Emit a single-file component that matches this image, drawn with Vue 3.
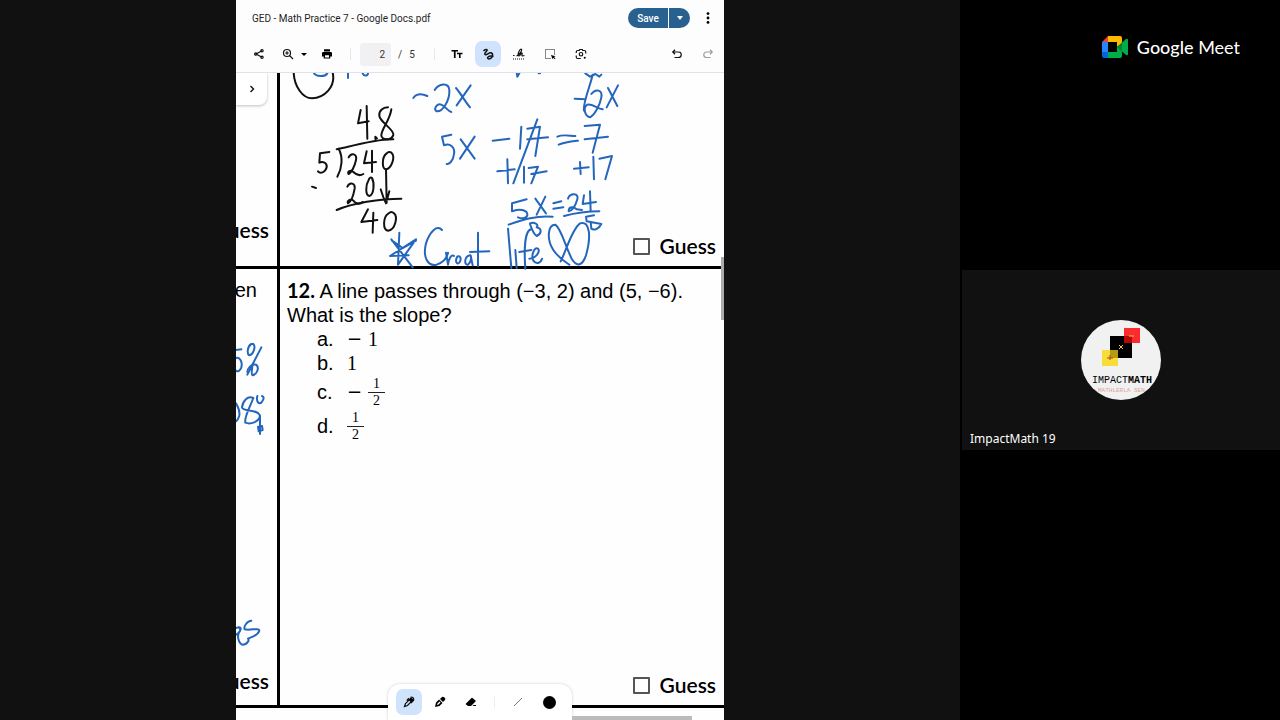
<template>
    <div class="meeting">
        <main class="shared">
            <section class="viewer">
                <header class="titleBar">
                    <h1 class="fileName">GED - Math Practice 7 - Google Docs.pdf</h1>
                    <div class="saveGroup">
                        <button type="button" class="saveButton">Save</button>
                        <button type="button" class="saveMore" aria-label="Save options">
                            <svg width="8" height="4" viewBox="0 0 8 4"><path d="M1 0h6L4 4z" fill="#fff" /></svg>
                        </button>
                    </div>
                    <button type="button" class="menuButton" aria-label="Menu">
                        <svg width="4" height="12" viewBox="0 0 4 12">
                            <circle cx="2" cy="1.6" r="1.4" /><circle cx="2" cy="6" r="1.4" /><circle cx="2" cy="10.4" r="1.4" />
                        </svg>
                    </button>
                </header>

                <div class="toolbar">
                    <div class="group fileTools">
                        <button type="button" class="tool" aria-label="Share">
                            <svg class="icon" viewBox="0 0 24 24">
                                <path d="M18 5.500 6 12l12 6.500" class="line" />
                                <circle cx="18" cy="5.500" r="2.300" class="line" /><circle cx="5.500" cy="12" r="2.300" class="line" /><circle cx="18" cy="18.500" r="2.300" class="line" />
                            </svg>
                        </button>
                        <button type="button" class="tool zoomTool" aria-label="Zoom">
                            <svg class="icon" viewBox="0 0 24 24">
                                <circle cx="10" cy="10" r="7" class="line" />
                                <path d="M15 15l7 7M10 6.500v7M6.500 10h7" class="line" />
                            </svg>
                            <svg width="6" height="3" viewBox="0 0 6 3"><path d="M0 0h6L3 3z" /></svg>
                        </button>
                        <button type="button" class="tool" aria-label="Print">
                            <svg class="icon" viewBox="0 0 24 24">
                                <path d="M6 2.500h12V7H6zM4.500 8h15A2.500 2.500 0 0 1 22 10.500V17h-3.500v4h-13v-4H2v-6.500A2.500 2.500 0 0 1 4.500 8zM8 14.500V19h8v-4.500z" fill-rule="evenodd" />
                            </svg>
                        </button>
                    </div>
                    <div class="pager">
                        <input v-model="page" class="pageInput" type="text" aria-label="Page number" />
                        <span>/</span>
                        <span>5</span>
                    </div>
                    <div class="group editTools">
                        <button type="button" class="tool" aria-label="Text">
                            <svg class="icon" viewBox="0 0 24 24">
                                <path d="M1 4h13v3.200H9.200V20H5.800V7.200H1zM12 9.500h11v3h-3.800V20H16v-7.500h-4z" />
                            </svg>
                        </button>
                        <button type="button" class="tool active" aria-label="Draw">
                            <svg class="icon" viewBox="0 0 24 24">
                                <path d="M3 6c3-4 8-4 7-1-1 3-6 5-4 8 3 3 8-5 13-3 5 3 0 12-5 12-6-1-2-8 9-5" class="line thick" />
                            </svg>
                        </button>
                        <button type="button" class="tool" aria-label="Sign">
                            <svg class="icon" viewBox="0 0 24 24">
                                <path d="M0 15h3M7 16c7-2 13-14 9-14-4 1-8 14-4 14 3 0 4-7 6-6 2 1-2 6 1 6l4-1" class="line" />
                                <path d="M0 22h24" class="line dotted" />
                            </svg>
                        </button>
                        <button type="button" class="tool" aria-label="Select">
                            <svg class="icon" viewBox="0 0 24 24">
                                <path d="M21 13V3H3v18h11" class="line dotted" />
                                <path d="M14 14l9 2.500-3 1.500 3 3-1.500 1.500-3-3-1.500 3z" />
                            </svg>
                        </button>
                        <button type="button" class="tool" aria-label="Search with lens">
                            <svg class="icon" viewBox="0 0 24 24">
                                <path d="M2.500 10V8q0-3 3-3h3l1-2h5l1 2h3q3 0 3 3v3M2.500 15v3q0 3 3 3h6" class="line" />
                                <circle cx="12" cy="12.500" r="3.500" class="line" /><circle cx="19.500" cy="19.500" r="2" />
                            </svg>
                        </button>
                    </div>
                    <div class="group history">
                        <button type="button" class="tool" aria-label="Undo">
                            <svg class="icon" viewBox="0 0 24 24"><path d="M8 3.500 3.500 8 8 12.500M4 8h11a5.500 5.500 0 0 1 0 11H7" class="line" /></svg>
                        </button>
                        <button type="button" class="tool" aria-label="Redo" disabled>
                            <svg class="icon" viewBox="0 0 24 24"><path d="M16 3.500 20.500 8 16 12.500M20 8H9a5.500 5.500 0 0 0 0 11h8" class="line" /></svg>
                        </button>
                    </div>
                </div>

                <div class="document">
                    <div class="sheet">
                        <div class="cell side">
                            <span class="guess">uess</span>
                        </div>
                        <div class="cell">
                            <label class="guess"><input v-model="guesses[0]" type="checkbox" />Guess</label>
                        </div>
                        <div class="cell side">
                            <p class="question">en</p>
                            <span class="guess">uess</span>
                        </div>
                        <div class="cell">
                            <p class="question"><b>12.</b> A line passes through (−3, 2) and (5, −6).<br />What is the slope?</p>
                            <ul class="answers">
                                <li v-for="answer in answers" :key="answer.letter" :class="{ tall: answer.bottom }">
                                    <span class="letter">{{ answer.letter }}.</span>
                                    <span v-if="answer.minus" class="minus">−</span>
                                    <span v-if="answer.bottom" class="fraction">
                                        <span>{{ answer.top }}</span>
                                        <span class="bottom">{{ answer.bottom }}</span>
                                    </span>
                                    <span v-else class="number">{{ answer.top }}</span>
                                </li>
                            </ul>
                            <label class="guess"><input v-model="guesses[1]" type="checkbox" />Guess</label>
                        </div>
                    </div>

                    <!-- handwriting layer, three units per pixel -->
                    <svg class="ink" viewBox="0 9 1464 1941" width="488" height="647">
                        <g stroke="#111">
                            <path d="M173 8C175 50 200 85 228 85 265 84 300 50 290 8" />
                            <path d="M374 120 366 160 398 154M392 108 394 206M418 200l5 5-5 2z" />
                            <path d="M456 112C440 112 428 122 430 138 434 158 474 178 472 194 468 212 436 212 436 196 436 178 462 150 466 118" />
                            <path d="M302 238 330 232C370 222 430 207 472 208M308 236C322 262 318 295 304 320" />
                            <path d="M280 246 252 250 250 278C262 272 274 280 272 292 268 308 252 312 246 304" />
                            <path d="M338 262C346 246 364 252 360 270 356 290 346 308 338 312 332 306 344 298 352 306 360 314 372 318 382 312" />
                            <path d="M392 244 384 280 420 276M408 242V306" />
                            <path d="M452 250C436 262 438 298 450 298 466 296 478 262 468 250 464 244 456 246 452 250M228 350l12 4" />
                            <path d="M334 350C342 334 358 340 356 356 352 378 344 396 336 400 332 392 344 384 352 392 358 400 370 406 380 396" />
                            <path d="M398 330C388 346 388 376 400 378 414 374 416 340 408 324 404 320 400 324 398 330" />
                            <path d="M450 298 452 398M434 358C440 378 446 392 450 400L460 364M302 420C350 400 430 386 496 386" />
                            <path d="M396 418 376 456 424 450M412 428 410 488M458 430C440 440 440 480 456 482 478 480 486 440 474 430 468 424 462 426 458 430" />
                        </g>
                        <g stroke="#2566bd">
                            <path d="M234 10C240 20 266 22 274 10M336 10V24M380 10C384 20 396 18 396 10" />
                            <path d="M490 488 486 584 540 508 462 558 518 556M466 508 530 592M468 512 500 534 540 512" />
                        </g>
                        <g stroke="#2566bd" transform="translate(462 0)">
                            <path d="M380 8 382 20 388 10M446 10h4" />
                            <path d="M70 84C80 70 98 72 112 78M134 60C146 40 176 36 178 60 180 90 158 126 140 124 130 118 140 98 154 104 168 110 174 124 184 126" />
                            <path d="M198 54C212 70 226 96 240 112M242 46 200 106" />
                            <path d="M184 194 156 200 162 226C180 218 196 232 192 252 190 274 176 284 170 282M212 208 254 266M254 200 210 266" />
                            <path d="M308 212 358 206M394 170 390 236M412 176 450 170 436 258M412 208 474 202M442 148 370 340" />
                            <path d="M322 304 374 298M352 268 354 340M402 290V338M416 294 444 290 424 340M424 312 470 304" />
                            <path d="M410 388 366 400V424C386 414 414 420 412 436 408 448 392 446 384 442M436 386 468 430M466 380 440 434" />
                            <path d="M356 464C400 448 440 436 488 440M420 460C432 456 448 462 440 472 456 476 456 490 440 498 430 492 424 474 420 462" />
                            <path d="M156 480C140 462 118 488 108 520 98 560 112 590 140 584 162 576 172 560 174 548" />
                            <path d="M168 548 174 584C176 566 184 552 192 558M202 560C194 572 200 586 208 578 216 566 210 554 202 560" />
                            <path d="M240 556C222 560 222 586 234 584 244 578 244 560 242 556L248 586M264 488V588M240 546 298 544" />
                            <path d="M354 476 364 594M376 540 380 594M424 478C404 480 402 540 406 596M388 546 424 540" />
                            <path d="M418 566C436 566 452 546 444 536 434 528 422 556 430 572 438 584 452 580 456 566" />
                        </g>
                        <g stroke="#2566bd" transform="translate(762 0)">
                            <path d="M286 10 300 20 316 12 328 20 334 14M308 14C298 56 278 100 282 122M254 86 286 88" />
                            <path d="M304 72C318 54 338 60 334 82 330 104 314 136 300 142 284 138 278 112 292 104 306 100 322 116 338 118M354 54 382 108M384 46 350 112" />
                            <path d="M202 200C220 192 240 198 256 198M206 224C224 216 246 214 264 212M284 168 330 164 308 248M284 208 354 200" />
                            <path d="M252 296 296 292M270 276 272 312M310 260 312 328M328 266 366 258 346 328M190 400 214 394M190 416 220 412" />
                            <path d="M234 386C240 368 268 368 262 388 256 410 244 424 236 424 236 410 250 408 260 418L276 420M282 376 278 402 318 396M300 364 302 424" />
                            <path d="M222 438C260 428 290 424 328 424M312 436 288 440 290 454 334 462C326 478 312 482 304 476L302 456" />
                            <path d="M212 574C230 540 244 480 270 460 300 450 304 500 288 556 276 590 260 590 246 568 226 530 214 476 196 464 172 464 170 510 190 540 206 564 226 576 238 584" />
                        </g>
                        <g stroke="#2566bd" transform="translate(0 780)">
                            <path d="M0 60 16 58M0 84C12 80 20 96 16 112 12 124 4 126 0 122M46 42C34 48 32 72 40 76 52 74 60 50 52 42ZM76 52 34 134" />
                            <path d="M50 102C48 120 44 134 50 136 62 134 72 112 60 104 46 100 34 116 34 126M0 220C8 234 14 250 8 262 6 270 2 272 0 274" />
                            <path d="M52 204C34 196 20 214 18 232 20 246 66 236 72 258 68 276 44 284 28 278 24 262 40 236 52 204M64 198C60 214 68 224 76 218 86 206 84 200 78 198" />
                            <path d="M72 258V312M66 290 78 288 80 300 68 304Z" />
                        </g>
                        <g stroke="#2566bd" transform="translate(0 1590)">
                            <path d="M0 104C10 100 18 88 8 82M0 84C14 78 18 84 10 96 2 108 8 132 20 134 34 134 42 118 36 116M46 62C34 62 22 80 26 88 44 92 70 82 70 92 66 106 46 112 36 116" />
                        </g>
                    </svg>

                    <button type="button" class="expand" aria-label="Show sidebar">
                        <svg width="6" height="8" viewBox="0 0 6 8"><path d="M1.500 1l3 3-3 3" class="line" /></svg>
                    </button>

                    <div class="penBar">
                        <button type="button" class="tool active" aria-label="Pen">
                            <svg class="icon" viewBox="0 0 24 24">
                                <path d="M3 21l2-6L16 4l4 4L9 19zM12 4.500 7.500 9M15 3c2-2 8 0 6 6l-5 5" class="line" />
                                <path d="M12 9 16 4l4 4-5 4z" />
                            </svg>
                        </button>
                        <button type="button" class="tool" aria-label="Highlighter">
                            <svg class="icon" viewBox="0 0 24 24">
                                <path d="M2 22 4 13l6-6 7 7-6 6zM7 15l-1 3 3-1 4-4-2-2zM12 6l4-4q2-1 5 1t1 5l-4 4z" fill-rule="evenodd" />
                            </svg>
                        </button>
                        <button type="button" class="tool" aria-label="Eraser">
                            <svg class="icon" viewBox="0 0 24 24"><path d="M2 15 13 4q1-1 2 0l6 5q1 1 0 2l-9 9H6l-4-3q-1-1 0-2zM17 18h5v2h-7z" /></svg>
                        </button>
                        <span class="divider"></span>
                        <button type="button" class="tool" aria-label="Stroke width">
                            <svg width="8" height="8" viewBox="0 0 8 8"><path d="M0 8 8 0" stroke="#777" /></svg>
                        </button>
                        <button type="button" class="tool" aria-label="Colour"><span class="swatch"></span></button>
                    </div>
                    <span class="scrollV"></span>
                    <span class="scrollH"></span>
                </div>
            </section>
        </main>

        <aside class="people">
            <div class="brand">
                <svg width="26" height="22" viewBox="0 0 26 22">
                    <path d="M0 6h6v10H0z" fill="#2684fc" />
                    <path d="M0 6 6 0v6z" fill="#ea4335" />
                    <path d="M6 0h12q2 0 2 2v6l-5 3V6H6z" fill="#ffba00" />
                    <path d="M6 16h9v-5l5-3v12q0 2-2 2H6z" fill="#00ac47" />
                    <path d="M0 16h6v6H2q-2 0-2-2z" fill="#0066da" />
                    <path d="M15 11 24 3q2-1 2 1v14q0 2-2 1z" fill="#00ac47" />
                    <path d="M15 11l5-4.500v9z" fill="#00832d" />
                </svg>
                <span class="brandName"><b>Google</b> Meet</span>
            </div>
            <div class="tile">
                <svg class="avatar" width="80" height="80" viewBox="0 0 80 80">
                    <circle cx="40" cy="40" r="40" fill="#f1f1f1" />
                    <path d="M29 16h22v22H29z" />
                    <path d="M43 8h16v15H43z" fill="#fb2b30" />
                    <path d="M43 16h8v7h-8z" fill="#b60808" />
                    <path d="M21 30h16v16H21z" fill="#f8dc38" />
                    <path d="M29 30h8v8h-8z" fill="#b39b14" />
                    <path d="M38 25l4 4m0-4-4 4M48 16h5" stroke="#f5cf3c" />
                    <path d="M29 35v5m-3-2h6" stroke="#b3431c" />
                    <text x="11" y="63" font-size="10" class="logoText">IMPACT<tspan font-weight="700">MATH</tspan></text>
                    <text x="17" y="72" font-size="6" fill="#dfa49c" class="logoText">MATHLERLA SEN</text>
                </svg>
                <span class="personName">ImpactMath 19</span>
            </div>
        </aside>
    </div>
</template>

<script setup>
import { ref } from 'vue';

const page = ref('2')
const guesses = ref([false, false])

const answers = [
    { letter: 'a', minus: true, top: '1' },
    { letter: 'b', top: '1' },
    { letter: 'c', minus: true, top: '1', bottom: '2' },
    { letter: 'd', top: '1', bottom: '2' },
]
</script>

<style>
body {
    background: #000;
}
</style>

<style scoped>
* {
    box-sizing: border-box;
}

button {
    border: 0;
    padding: 0;
    background: none;
    font-family: inherit;
    display: flex;
    align-items: center;
    justify-content: center;
}

.meeting {
    display: grid;
    grid-template-columns: 3fr 1fr;
    min-height: 100vh;
    font-family: Roboto, "Liberation Sans", sans-serif;
}

.shared {
    display: grid;
    grid-template-columns: 236fr 488fr 236fr;
    background: #111;
}

.viewer {
    grid-column: 2;
    display: flex;
    flex-direction: column;
    min-width: 0;
    background: #fdfdfe;
    overflow: hidden;
}

.titleBar {
    display: flex;
    align-items: center;
    height: 36px;
    padding: 0 14px 0 16px;
    color: #1f1f1f;
}

.fileName {
    flex: 1;
    margin: 0;
    font-size: 10px;
    font-weight: 400;
    white-space: nowrap;
}

.saveGroup {
    display: flex;
    gap: 1px;
    height: 20px;
    margin-right: 16px;
}

.saveButton,
.saveMore {
    background: #286090;
    color: #fff;
    font-size: 10px;
    font-weight: 500;
}

.saveButton {
    width: 40px;
    border-radius: 10px 0 0 10px;
}

.saveMore {
    width: 21px;
    border-radius: 0 10px 10px 0;
}

.toolbar {
    display: flex;
    align-items: center;
    height: 37px;
    padding: 0 3px 0 10px;
    border-bottom: 1px solid #dfe2e8;
}

.group {
    display: flex;
    gap: 5px;
}

.fileTools {
    gap: 4px;
}

.tool {
    width: 26px;
    height: 26px;
    flex-shrink: 0;
    border-radius: 7px;
}

.tool:disabled {
    opacity: 0.4;
}

.zoomTool {
    width: 34px;
    gap: 7px;
    padding-left: 3px;
}

.active {
    background: #cfe3fc;
}

.icon {
    width: 12px;
    height: 12px;
    flex-shrink: 0;
}

.line {
    fill: none;
    stroke: #111;
    stroke-width: 2.4;
}

.thick {
    stroke-width: 3;
}

.dotted {
    stroke-dasharray: 2 2;
    stroke-width: 2;
}

.expand .line {
    stroke-width: 1.4;
}

.pager {
    display: flex;
    align-items: center;
    gap: 7px;
    height: 12px;
    margin: 0 9px 0 10px;
    padding: 0 19px 0 9px;
    border: solid #e6e7ea;
    border-width: 0 1px;
    font-size: 10px;
    color: #333;
}

.pageInput {
    width: 31px;
    height: 23px;
    padding: 0 6px;
    border: 0;
    border-radius: 3px;
    background: #f1f1f4;
    color: inherit;
    font: inherit;
    text-align: right;
}

.history {
    margin-left: auto;
}

.document {
    position: relative;
    flex: 1;
    display: flex;
    flex-direction: column;
    overflow: hidden;
    background: #fefefe;
}

.sheet {
    flex: 1;
    display: grid;
    grid-template-columns: 44px 1fr;
    grid-template-rows: 196px 1fr;
    margin-bottom: 12px;
}

.cell {
    display: flex;
    flex-direction: column;
    min-width: 0;
    padding: 9px 8px 8px 7px;
    border-bottom: 3px solid #000;
    overflow: hidden;
}

.side {
    align-items: flex-end;
    border-right: 3px solid #000;
}

.side .question {
    margin-right: 12px;
}

.question {
    margin: 0;
    font: 20px/24px "Liberation Sans", sans-serif;
}

.question b {
    font-family: "Lato", sans-serif;
}

.answers {
    margin: 0;
    padding: 0 0 0 30px;
    list-style: none;
    font: 20px/24px "Liberation Sans", sans-serif;
}

.answers li {
    display: flex;
    align-items: center;
    height: 24px;
}

.answers .tall {
    height: 34px;
}

.letter {
    width: 30px;
}

.minus {
    width: 21px;
    font-family: "DejaVu Sans", sans-serif;
    font-size: 18px;
}

.number {
    font-family: "Liberation Serif", serif;
}

.fraction {
    display: flex;
    flex-direction: column;
    width: 17px;
    font: 14px/16px "Liberation Serif", serif;
    text-align: center;
}

.bottom {
    border-top: 1px solid #222;
}

.guess {
    display: flex;
    align-items: center;
    gap: 10px;
    margin-top: auto;
    align-self: flex-end;
    font: 600 21px/24px "Lato", sans-serif;
}

.side .guess {
    margin-bottom: 4px;
}

.side:first-child .guess {
    margin-bottom: 16px;
}

.guess input {
    appearance: none;
    width: 17px;
    height: 17px;
    margin: 0;
    border: 2px solid #555;
    border-radius: 1px;
    flex-shrink: 0;
}

.ink {
    position: absolute;
    top: 0;
    left: 0;
    fill: none;
    stroke-width: 6;
    stroke-linecap: round;
    stroke-linejoin: round;
    pointer-events: none;
}

.expand {
    position: absolute;
    top: 0;
    left: 0;
    width: 31px;
    height: 32px;
    border-radius: 0 0 8px 0;
    background: #fff;
    box-shadow: 0 1px 3px rgba(0, 0, 0, 0.25);
}

.penBar {
    position: absolute;
    bottom: 0;
    left: 50%;
    transform: translateX(-50%);
    display: flex;
    align-items: center;
    gap: 5px;
    width: 184px;
    height: 36px;
    padding: 0 8px;
    border-radius: 12px 12px 0 0;
    background: #fff;
    box-shadow: 0 0 3px rgba(0, 0, 0, 0.2);
}

.divider {
    width: 1px;
    height: 12px;
    margin: 0 5px;
    background: #eee;
}

.swatch {
    width: 13px;
    height: 13px;
    border-radius: 50%;
    background: #000;
}

.scrollV {
    position: absolute;
    top: 184px;
    right: 0;
    width: 3px;
    height: 63px;
    background: #aaa;
}

.scrollH {
    position: absolute;
    bottom: 0;
    right: 32px;
    width: 120px;
    height: 4px;
    background: #bbb;
}

.people {
    display: grid;
    grid-template-rows: 1fr auto 1fr;
    padding-left: 2px;
    background: #000;
    color: #fff;
}

.brand {
    display: flex;
    justify-content: flex-end;
    align-items: center;
    gap: 9px;
    height: 28px;
    margin: 33px 40px 0 0;
}

.brandName {
    font: 18px/28px "Lato", sans-serif;
}

.brandName b {
    font-weight: 500;
}

.tile {
    display: flex;
    align-items: center;
    justify-content: center;
    position: relative;
    aspect-ratio: 53 / 30;
    background: #111;
}

.logoText {
    font-family: "Liberation Mono", monospace;
}

.personName {
    position: absolute;
    left: 8px;
    bottom: 2px;
    font: 12px/18px "Noto Sans", sans-serif;
}
</style>
